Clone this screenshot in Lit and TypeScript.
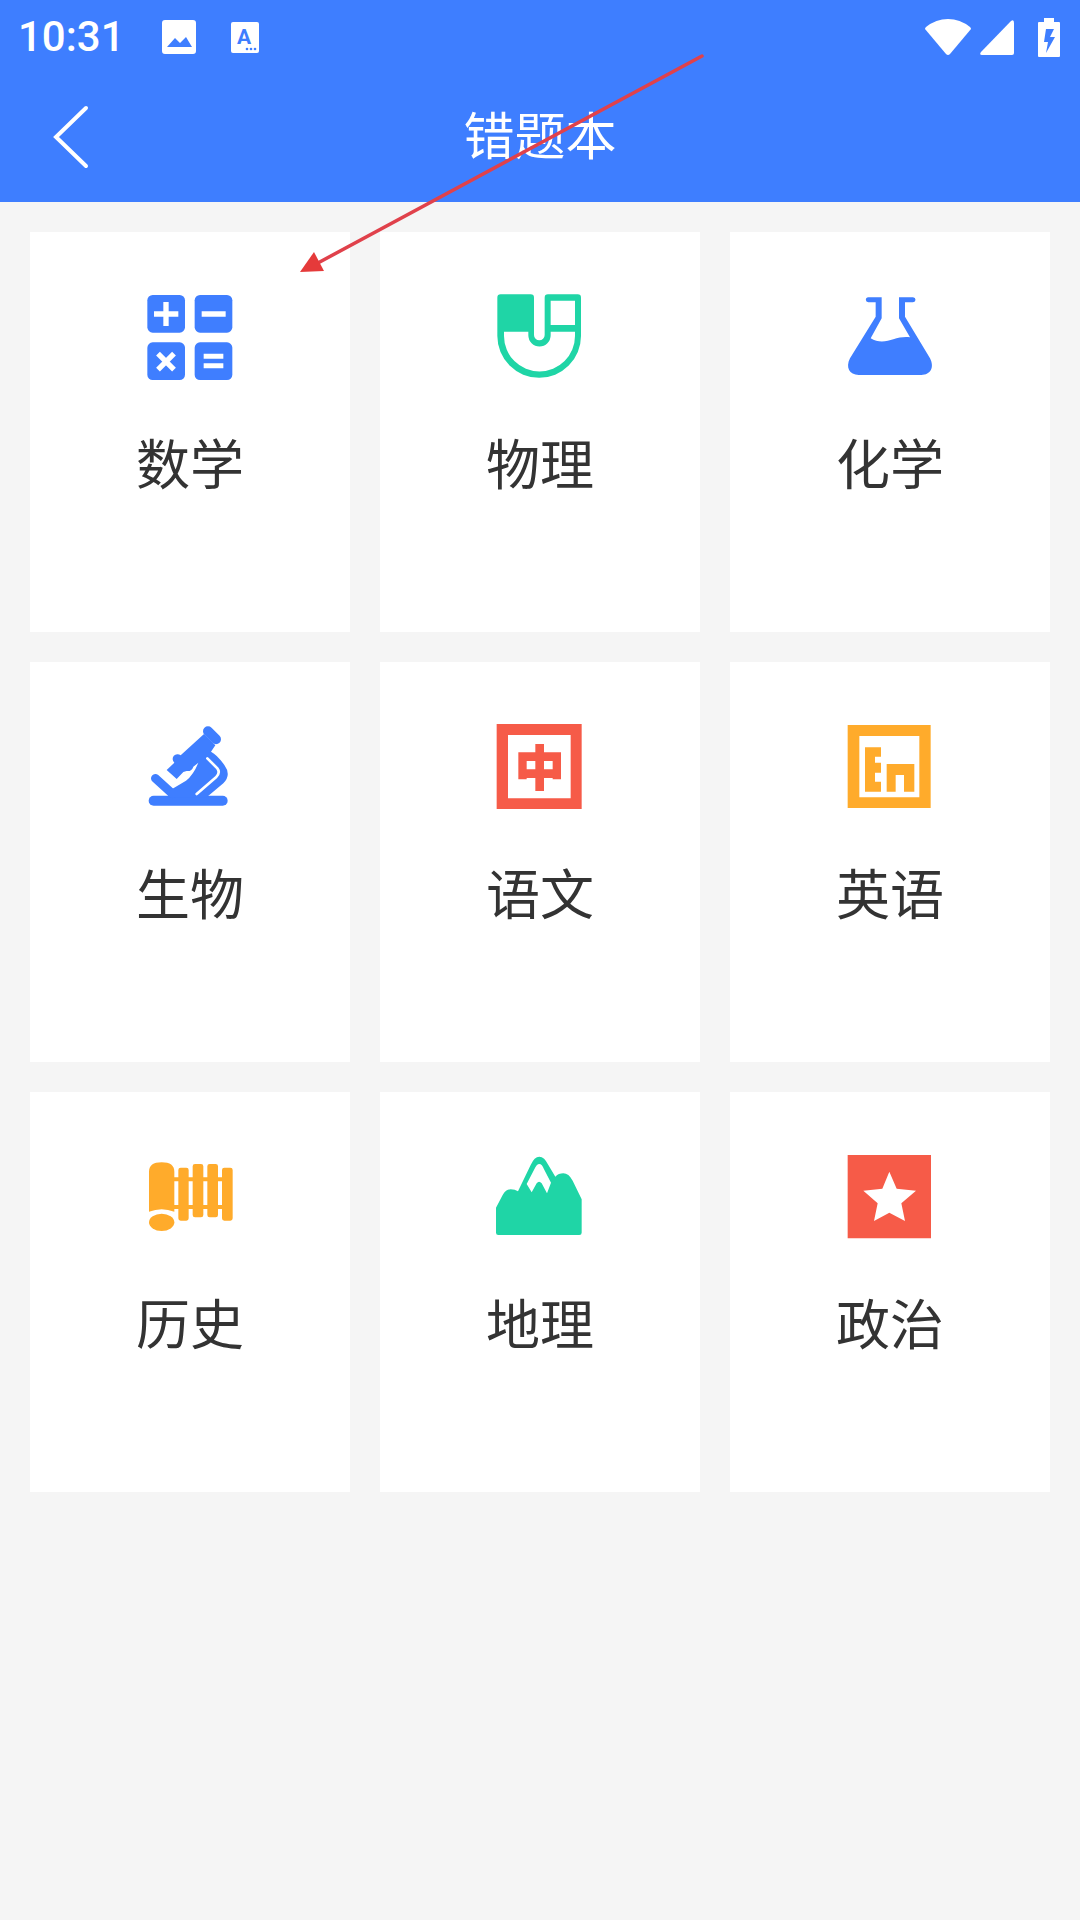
import { LitElement, html, css, svg } from "lit";
import { customElement } from "lit/decorators.js";

const W = "#fff";
const icons: Record<string, unknown> = {
  calc: svg`<rect x="52" y="45" width="113" height="113" rx="16"/><rect x="194" y="45" width="113" height="113" rx="16"/><rect x="52" y="187" width="113" height="113" rx="16"/><rect x="194" y="187" width="113" height="113" rx="16"/>
    <path fill=${W} d="M100 66h16v28h29v16h-29v28h-16v-28H72V94h28zM215 94h72v16h-72zM221 221h59v15h-59zM221 250h59v15h-59z"/>
    <path stroke=${W} stroke-width="16" d="M84 221l48 48M132 221l-48 48"/>`,
  phys: svg`<path fill-rule="evenodd" d="M62 43H152Q162 43 162 53V165A16 16 0 0 0 194 165V53Q194 43 204 43H293Q303 43 303 53V168A125.500 125.500 0 0 1 52 168V53Q52 43 62 43ZM72 155H145V166A33.500 33.500 0 0 0 212 166V155H285V168A106.500 106.500 0 0 1 72 168ZM212 62H285V135H212Z"/>`,
  flask: svg`<path d="M115 52H155V115L122 175C145 190 170 185 190 178C207 172 225 170 240 172L207 115V52H249A7.500 7.500 0 0 1 249 67H225V110L300 235C314 262 302 285 274 285H86C58 285 46 262 60 235L137 110V67H115A7.500 7.500 0 0 1 115 52Z"/>`,
  micro: svg`<rect x="56" y="257" width="237" height="30" rx="15"/>
    <path stroke="currentColor" stroke-width="26" stroke-linecap="round" d="M76 205L128 252"/>
    <path stroke="currentColor" stroke-width="30" stroke-linecap="round" d="M234 64L258 88"/>
    <path d="M110 180L133 158A13 13 0 0 1 152 136L222 72L256 106L243 125Q262 135 283 165Q305 195 280 220L230 262H112L125 238L168 212Q190 195 205 158L190 170Q185 185 170 183L160 186L140 207Z"/>
    <path fill="none" stroke=${W} stroke-width="8" stroke-linecap="round" d="M232 145L262 175Q272 188 258 202L200 252"/>`,
  zh: svg`<path fill-rule="evenodd" d="M50 42H305V297H50ZM84 75V265H272V75Z"/>
    <path fill-rule="evenodd" d="M166 102H192V127H243V208H218V204H192V243H166V204H140V208H115V127H166ZM140 153V178H166V153ZM192 153V178H218V153Z"/>`,
  en: svg`<path fill-rule="evenodd" d="M53 45H302V294H53ZM88 78V262H268V78Z"/>
    <path d="M105 112H153V140H135V158H153V188H135V215H153V245H105ZM170 162H253V245H222V195H197V245H170Z"/>`,
  hist: svg`<path d="M57 215V95Q57 67 95 67Q133 67 133 95V112H145V90Q145 83 152 83H169Q176 83 176 90V112H188V79Q188 72 195 72H213Q220 72 220 79V112H232V79Q232 72 239 72H257Q264 72 264 79V112H276V90Q276 83 283 83H301Q308 83 308 90V235Q308 242 301 242H283Q276 242 276 235V207H264V225Q264 232 257 232H239Q232 232 232 225V207H220V225Q220 232 213 232H195Q188 232 188 225V207H176V235Q176 242 169 242H152Q145 242 145 235V207H133V215Q95 200 57 215ZM133 124V195H145V124ZM176 124V195H188V124ZM220 124V195H232V124ZM264 124V195H276V124Z" fill-rule="evenodd"/>
    <ellipse cx="95" cy="247" rx="38" ry="26"/>`,
  geo: svg`<path fill-rule="evenodd" d="M48 203L68 165Q78 148 92 148Q105 148 114 154L152 75Q163 50 178 50Q193 50 205 75L226 110Q236 100 250 100Q266 100 278 122L305 178V278Q305 285 298 285H55Q48 285 48 278ZM178 72Q170 72 163 88L140 132L155 157L170 130Q177 120 185 130L201 160L213 128L192 88Q186 72 178 72Z"/>`,
  star: svg`<path fill-rule="evenodd" d="M53 45H303V295H53ZM178 95L157 146L100 152L143 190L132 243L178 218L225 243L214 190L258 152L200 146Z"/>`,
};

const subjects = [
  { name: "数学", icon: "calc", tone: "blue" },
  { name: "物理", icon: "phys", tone: "green" },
  { name: "化学", icon: "flask", tone: "blue" },
  { name: "生物", icon: "micro", tone: "blue" },
  { name: "语文", icon: "zh", tone: "red" },
  { name: "英语", icon: "en", tone: "orange" },
  { name: "历史", icon: "hist", tone: "orange" },
  { name: "地理", icon: "geo", tone: "green" },
  { name: "政治", icon: "star", tone: "red" },
];

@customElement("app-root")
export class AppRoot extends LitElement {
  static styles = css`
    :host {
      display: block;
      position: relative;
      min-height: 1920px;
      background: #f5f5f5;
      font-family: "Noto Sans CJK SC", "Noto Sans", sans-serif;
    }
    .header { background: #3e7eff; color: #fff; height: 202px; display: flex; flex-direction: column; }
    .status { height: 74px; display: flex; align-items: center; padding: 0 20px 0 18px; }
    .time { font: 500 42px/1 Roboto, sans-serif; width: 105px; }
    .status svg { display: block; fill: #fff; }
    .pic { width: 34px; height: 34px; margin-left: 39px; }
    .note { width: 28px; height: 31px; margin-left: 35px; }
    .spacer { flex: 1; }
    .wifi { width: 46px; height: 36px; }
    .signal { width: 34px; height: 35px; margin-left: 9px; }
    .battery { width: 22px; height: 39px; margin-left: 24px; }
    .toolbar { height: 128px; display: flex; align-items: center; justify-content: center; position: relative; padding-bottom: 9px; box-sizing: border-box; }
    .back { position: absolute; left: 50px; top: 28px; width: 44px; height: 70px; fill: none; stroke: #fff; stroke-width: 4; stroke-linecap: round; }
    .title { font-size: 51px; line-height: 1; }
    .grid { display: grid; grid-template-columns: repeat(3, 320px); grid-auto-rows: 400px; gap: 30px; padding: 30px; }
    .card { background: #fff; display: flex; flex-direction: column; align-items: center; padding-top: 48px; }
    .card svg { width: 120px; height: 120px; display: block; fill: currentColor; }
    .name { font-size: 54px; line-height: 70px; margin-top: 27px; color: #333; }
    .blue { color: #3f7eff; }
    .green { color: #1fd5a6; }
    .red { color: #f65b48; }
    .orange { color: #ffab2b; }
    .arrow { position: absolute; left: 0; top: 0; width: 1080px; height: 300px; pointer-events: none; }
  `;

  render() {
    return html`
      <div class="header">
        <div class="status">
          <span class="time">10:31</span>
          <svg class="pic" viewBox="0 0 34 34"><path fill-rule="evenodd" d="M3 0H31Q34 0 34 3V31Q34 34 31 34H3Q0 34 0 31V3Q0 0 3 0ZM5 27H30L24 17L18 23L13 18Z"/></svg>
          <svg class="note" viewBox="0 0 28 31">
            <rect width="28" height="31" rx="2"/>
            <text x="13" y="22" text-anchor="middle" font-family="Roboto, sans-serif" font-weight="700" font-size="21" fill="#3e7eff">A</text>
            <g fill="#3e7eff"><circle cx="16" cy="27" r="1.300"/><circle cx="20" cy="27" r="1.300"/><circle cx="24" cy="27" r="1.300"/></g>
          </svg>
          <span class="spacer"></span>
          <svg class="wifi" viewBox="0 0 46 36"><path d="M0 10Q0 9 1 8Q11 0 23 0Q35 0 45 8Q46 9 46 10L25 35Q23 37 21 35Z"/></svg>
          <svg class="signal" viewBox="0 0 34 35"><path d="M31 1Q34 -1 34 3V33Q34 35 32 35H2Q-1 35 1 32Z"/></svg>
          <svg class="battery" viewBox="0 0 22 39"><path fill-rule="evenodd" d="M6 0H16V4H21Q22 4 22 5V38Q22 39 21 39H1Q0 39 0 38V5Q0 4 1 4H6ZM8 11L6 24H10L8 35L17 19H12L16 11Z"/></svg>
        </div>
        <div class="toolbar">
          <svg class="back" viewBox="0 0 44 70"><path d="M36 6L6 35L36 64"/></svg>
          <span class="title">错题本</span>
        </div>
      </div>
      <div class="grid">
        ${subjects.map(
          (s) => html`<div class="card">
            <svg class=${s.tone} viewBox="0 0 360 360">${icons[s.icon]}</svg>
            <span class="name">${s.name}</span>
          </div>`
        )}
      </div>
      <svg class="arrow" viewBox="0 0 1080 300">
        <path d="M702 56L316 264" stroke="#e0414b" stroke-width="3.500" stroke-linecap="round" fill="none"/>
        <path d="M300 272L314 252L324 271Z" fill="#e53a3a"/>
      </svg>
    `;
  }
}
